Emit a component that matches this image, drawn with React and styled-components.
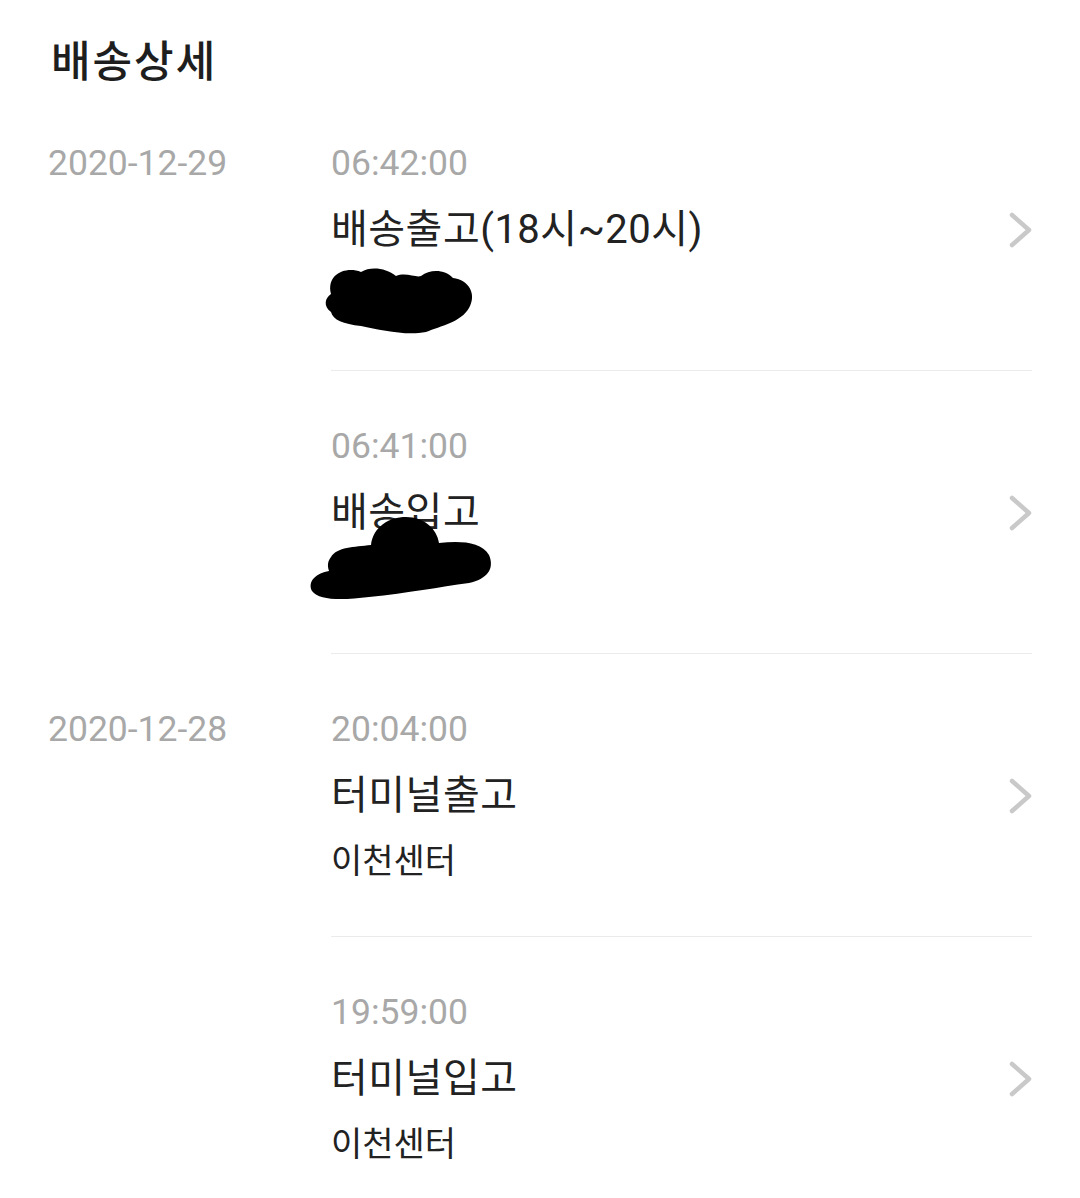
import styled, { createGlobalStyle } from 'styled-components';

const GlobalStyle = createGlobalStyle`
  html, body {
    margin: 0;
    padding: 0;
    background: #ffffff;
  }
  body {
    font-family: Roboto, "Noto Sans CJK KR", sans-serif;
    color: #222222;
  }
`;

const groups = [
  {
    date: '2020-12-29',
    entries: [
      { time: '06:42:00', title: '배송출고(18시~20시)', blob: 1 },
      { time: '06:41:00', title: '배송입고', blob: 2 },
    ],
  },
  {
    date: '2020-12-28',
    entries: [
      { time: '20:04:00', title: '터미널출고', place: '이천센터' },
      { time: '19:59:00', title: '터미널입고', place: '이천센터' },
    ],
  },
];

function Chevron() {
  return (
    <ChevronIcon viewBox="0 0 26 36">
      <polyline points="4,3 21,18 4,33" />
    </ChevronIcon>
  );
}

// hand-drawn redaction marks over the address lines
function Scribble({ kind }) {
  if (kind === 1) {
    return (
      <Redaction $left={-10} $top={-6} width="156" height="74" viewBox="0 0 156 74">
        <path d="M10 30 C5 10, 25 2, 40 8 C50 2, 65 4, 75 12 C85 8, 95 14, 100 12 C110 4, 125 6, 132 14 C148 16, 156 30, 148 44 C140 58, 120 62, 105 68 C85 72, 60 66, 40 62 C22 60, 12 56, 10 48 C2 42, 4 34, 10 30 Z" />
      </Redaction>
    );
  }
  return (
    <Redaction $left={-24} $top={-38} width="186" height="88" viewBox="-2 0 186 88">
      <path d="M22 42 C28 32, 45 32, 62 30 C64 12, 80 2, 97 2 C115 2, 128 14, 130 28 C150 26, 172 26, 180 40 C186 54, 178 64, 160 68 C130 72, 100 78, 60 82 C35 85, 10 86, 3 76 C-2 66, 8 58, 20 56 C18 50, 19 46, 22 42 Z" />
    </Redaction>
  );
}

function App() {
  return (
    <Page>
      <GlobalStyle />
      <Heading>배송상세</Heading>
      {groups.map((g) => (
        <Group key={g.date}>
          <DateCell>{g.date}</DateCell>
          <Entries>
            {g.entries.map((e) => (
              <Entry key={e.time}>
                <Time>{e.time}</Time>
                <TitleRow>
                  <Title>{e.title}</Title>
                  <Chevron />
                </TitleRow>
                <Place>{e.blob ? <Scribble kind={e.blob} /> : e.place}</Place>
              </Entry>
            ))}
          </Entries>
        </Group>
      ))}
    </Page>
  );
}

const Page = styled.div`
  padding: 35px 48px 0 48px;
  min-height: 1198px;
  box-sizing: border-box;
`;

const Heading = styled.h1`
  margin: 0 0 6px 3px;
  font-family: "Noto Sans CJK KR", sans-serif;
  font-size: 43px;
  font-weight: 500;
  letter-spacing: 2px;
  line-height: 47px;
  color: #1e1e1e;
`;

const Group = styled.section`
  display: grid;
  grid-template-columns: 283px 1fr;
`;

const DateCell = styled.div`
  padding-top: 53px;
  font-size: 35.5px;
  line-height: 44px;
  color: #a8a8a8;
`;

const Entries = styled.div`
  display: flex;
  flex-direction: column;
`;

const Entry = styled.div`
  padding: 53px 0 50px;
  border-bottom: 1.5px solid #ebebeb;
`;

const Time = styled.div`
  font-size: 35.5px;
  line-height: 44px;
  color: #a8a8a8;
  margin-bottom: 20px;
`;

const TitleRow = styled.div`
  display: flex;
  align-items: center;
  justify-content: space-between;
  height: 50px;
`;

const Title = styled.div`
  font-size: 40px;
  letter-spacing: 0.5px;
  line-height: 50px;
  color: #222222;
`;

const ChevronIcon = styled.svg`
  width: 26px;
  height: 36px;
  margin-right: -2px;
  fill: none;
  stroke: #c9c9c9;
  stroke-width: 4.5;
  stroke-linecap: round;
  stroke-linejoin: round;
`;

const Place = styled.div`
  position: relative;
  margin-top: 15px;
  height: 50px;
  font-size: 34px;
  line-height: 50px;
  color: #222222;
`;

const Redaction = styled.svg`
  position: absolute;
  left: ${(p) => p.$left}px;
  top: ${(p) => p.$top}px;
  fill: #000000;
  overflow: visible;
`;

export default App;
